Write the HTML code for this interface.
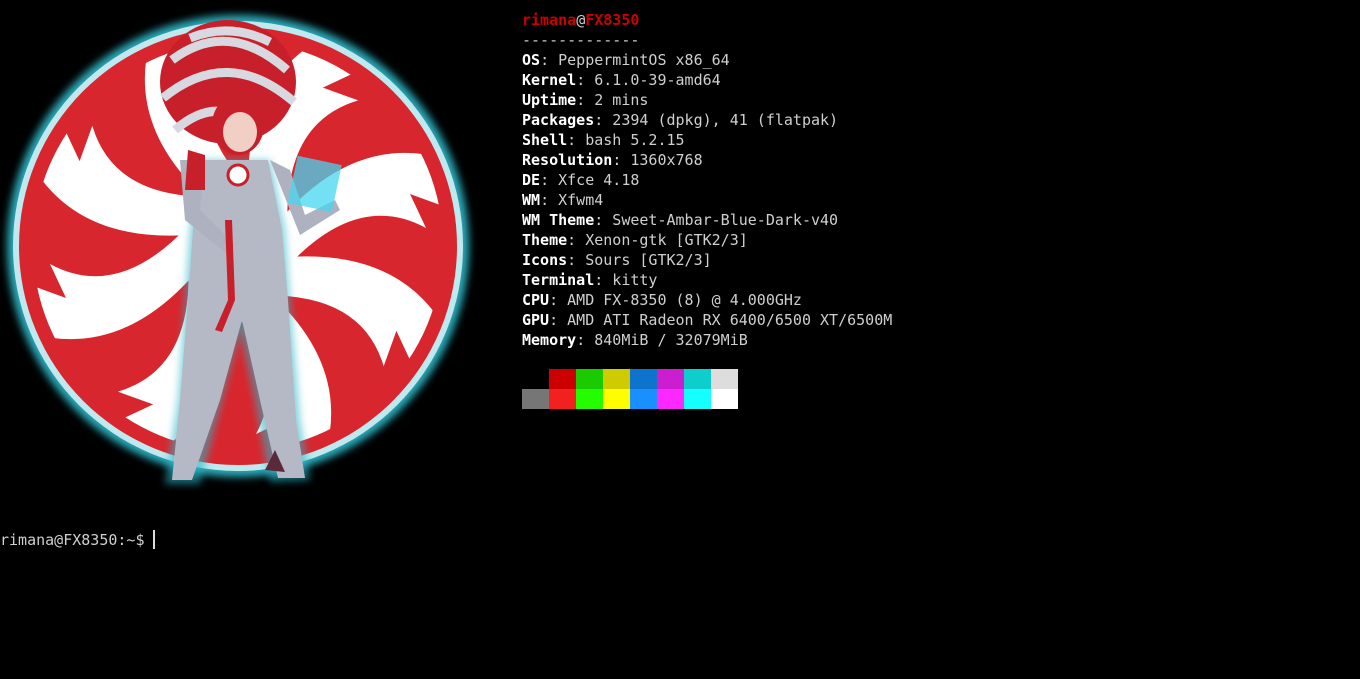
<!DOCTYPE html>
<html><head><meta charset="utf-8"><style>
body{margin:0;background:#000;width:1360px;height:679px;overflow:hidden;position:relative;font-family:"DejaVu Sans Mono","Liberation Mono",monospace;font-size:15px;color:#cfcfcf}
#info{position:absolute;left:522px;top:10px;line-height:20px;white-space:pre}
b{color:#fff}
.r{color:#cc0000;font-weight:bold}
.blk{position:absolute;width:27px;height:20px}
#prompt{position:absolute;left:0;top:530px;line-height:20px;white-space:pre}
#cur{position:absolute;left:153px;top:530px;width:2px;height:19px;background:#ddd}
</style></head><body>
<svg width="480" height="500" style="position:absolute;left:0;top:0">
<defs><filter id="g"><feGaussianBlur stdDeviation="4"/></filter>
<clipPath id="c"><circle cx="0" cy="0" r="205"/></clipPath></defs>
<circle cx="238" cy="246" r="231" fill="#2aa9b8" filter="url(#g)"/>
<circle cx="238" cy="246" r="225" fill="#bfe9ee"/>
<circle cx="238" cy="246" r="219" fill="#d8262e"/>
<g transform="translate(238 246)" clip-path="url(#c)">
<g id="bl"><path d="M25 -5 Q110 -120 215 -85 L205 -40 L172 -52 L188 -18 Q120 -55 50 20 Z" fill="#fff"/></g>
<use href="#bl" transform="rotate(45)"/><use href="#bl" transform="rotate(90)"/><use href="#bl" transform="rotate(135)"/>
<use href="#bl" transform="rotate(180)"/><use href="#bl" transform="rotate(225)"/><use href="#bl" transform="rotate(270)"/><use href="#bl" transform="rotate(315)"/>
</g>
<g>
<path d="M200 160 L270 160 L285 230 L290 300 L300 420 L310 480 L270 482 L255 400 L240 330 L222 400 L200 484 L165 484 L178 400 L185 300 L190 230 Z" fill="#2bb5c8" opacity=".6" filter="url(#g)"/>
<path d="M205 160 L268 160 L282 230 L288 300 L296 420 L305 478 L278 478 L260 400 L242 320 L220 400 L192 480 L172 480 L180 400 L188 300 L193 230 Z" fill="#b5b9c6"/>
<path d="M180 160 L205 160 L200 210 L235 245 L225 252 L185 220 Z" fill="#aeb2c0"/>
<path d="M270 160 L290 170 L305 215 L335 200 L340 210 L300 235 Z" fill="#aeb2c0"/>
<rect x="292" y="160" width="45" height="48" fill="#46d6f0" opacity=".75" transform="rotate(12 315 185)"/>
<path d="M188 150 L205 155 L205 190 L185 190 Z" fill="#c8202a"/>
<circle cx="238" cy="175" r="10" fill="#fff" stroke="#c8202a" stroke-width="3"/>
<path d="M225 220 L228 300 L215 330 L222 332 L235 300 L232 220 Z" fill="#c8202a"/>
<path d="M265 470 L275 450 L285 472 Z" fill="#5a2a3a"/>
<ellipse cx="228" cy="82" rx="68" ry="62" fill="#c8202a"/>
<path d="M172 60 Q228 18 287 70 M163 98 Q228 45 294 102 M190 38 Q230 22 270 42 M175 130 Q210 100 240 118" stroke="#d8d8e0" stroke-width="9" fill="none"/>
<ellipse cx="238" cy="125" rx="26" ry="30" fill="#c8202a"/>
<ellipse cx="240" cy="132" rx="17" ry="20" fill="#f2cfc5"/>
</g>
</svg>
<div id="info"><span class="r">rimana</span>@<span class="r">FX8350</span>
-------------
<b>OS</b>: PeppermintOS x86_64
<b>Kernel</b>: 6.1.0-39-amd64
<b>Uptime</b>: 2 mins
<b>Packages</b>: 2394 (dpkg), 41 (flatpak)
<b>Shell</b>: bash 5.2.15
<b>Resolution</b>: 1360x768
<b>DE</b>: Xfce 4.18
<b>WM</b>: Xfwm4
<b>WM Theme</b>: Sweet-Ambar-Blue-Dark-v40
<b>Theme</b>: Xenon-gtk [GTK2/3]
<b>Icons</b>: Sours [GTK2/3]
<b>Terminal</b>: kitty
<b>CPU</b>: AMD FX-8350 (8) @ 4.000GHz
<b>GPU</b>: AMD ATI Radeon RX 6400/6500 XT/6500M
<b>Memory</b>: 840MiB / 32079MiB</div>
<div class="blk" style="left:522px;top:369px;background:#000"></div>
<div class="blk" style="left:549px;top:369px;background:#cc0000"></div>
<div class="blk" style="left:576px;top:369px;background:#19cb00"></div>
<div class="blk" style="left:603px;top:369px;background:#cecb00"></div>
<div class="blk" style="left:630px;top:369px;background:#0d73cc"></div>
<div class="blk" style="left:657px;top:369px;background:#cb1ed1"></div>
<div class="blk" style="left:684px;top:369px;background:#0dcdcd"></div>
<div class="blk" style="left:711px;top:369px;background:#dddddd"></div>
<div class="blk" style="left:522px;top:389px;background:#767676"></div>
<div class="blk" style="left:549px;top:389px;background:#f2201f"></div>
<div class="blk" style="left:576px;top:389px;background:#23fd00"></div>
<div class="blk" style="left:603px;top:389px;background:#fffd00"></div>
<div class="blk" style="left:630px;top:389px;background:#1a8fff"></div>
<div class="blk" style="left:657px;top:389px;background:#fd28ff"></div>
<div class="blk" style="left:684px;top:389px;background:#14ffff"></div>
<div class="blk" style="left:711px;top:389px;background:#ffffff"></div>
<div id="prompt">rimana@FX8350:~$ </div>
<div id="cur"></div>
</body></html>
